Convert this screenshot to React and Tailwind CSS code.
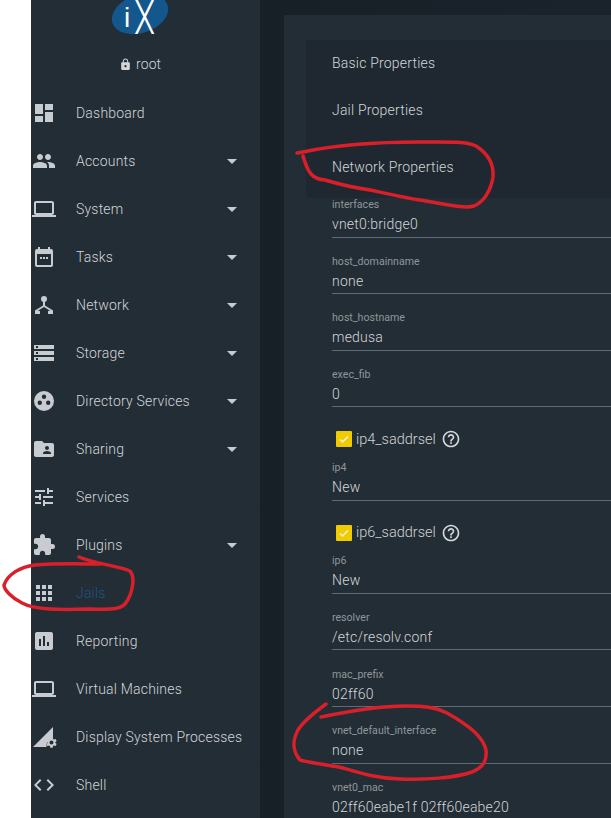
import React from "react";
import { MdDashboard, MdPeople, MdLaptop, MdStorage, MdFolderShared, MdTune, MdExtension, MdApps, MdAssessment, MdCode, MdLock, MdHelpOutline, MdSettings } from "react-icons/md";

const Tasks = (p) => (
  <svg viewBox="0 0 24 24" {...p} fill="currentColor"><path d="M19 4h-1V2h-2v2H8V2H6v2H5a2 2 0 0 0-2 2v14a2 2 0 0 0 2 2h14a2 2 0 0 0 2-2V6a2 2 0 0 0-2-2zm0 16H5V9h14v11zM8 12h2v2H8zm3 0h2v2h-2zm3 0h2v2h-2z" /></svg>
);
const Net = (p) => (
  <svg viewBox="0 0 24 24" {...p} fill="currentColor"><circle cx="12" cy="6" r="3" /><path d="M3 17.5 11 12.5V7h2v5.5l8 5v3.5h-5v-3l2.200-.3L12 14l-6.200 3.700L8 18v3H3z" /></svg>
);
const Dir = (p) => (
  <svg viewBox="0 0 24 24" {...p} fill="currentColor"><path fillRule="evenodd" d="M12 2a10 10 0 1 0 0 20 10 10 0 0 0 0-20zm0 3.500a2.200 2.200 0 1 1 0 4.400 2.200 2.200 0 0 1 0-4.400zM7.800 11.500a2.200 2.200 0 1 1 0 4.400 2.200 2.200 0 0 1 0-4.400zm8.400 0a2.200 2.200 0 1 1 0 4.400 2.200 2.200 0 0 1 0-4.400z" /></svg>
);
const Proc = (p) => (
  <span className="relative block h-6 w-6">
    <svg viewBox="0 0 24 24" {...p} fill="currentColor"><path d="M1 22 21 2v12a6.500 6.500 0 0 0-6.500 8z" /></svg>
    <MdSettings className="absolute right-[-2px] bottom-0 h-[13px] w-[13px]" />
  </span>
);

const items = [
  ["Dashboard", MdDashboard, false],
  ["Accounts", MdPeople, true],
  ["System", MdLaptop, true],
  ["Tasks", Tasks, true],
  ["Network", Net, true],
  ["Storage", MdStorage, true],
  ["Directory Services", Dir, true],
  ["Sharing", MdFolderShared, true],
  ["Services", MdTune, false],
  ["Plugins", MdExtension, true],
  ["Jails", MdApps, false, true],
  ["Reporting", MdAssessment, false],
  ["Virtual Machines", MdLaptop, false],
  ["Display System Processes", Proc, false],
  ["Shell", MdCode, false],
];

function Field({ label, value }) {
  return (
    <div className="h-[56.67px]">
      <div className="h-[13px] text-[10.6px] leading-[13px] text-[#8f969c]">{label}</div>
      <div className="mt-[3px] h-[23.500px] text-[14px] font-light leading-[20px] tracking-[0.22px] text-[#d3d6d9] border-b border-[#5f6a72]">{value}</div>
    </div>
  );
}

function Check({ label }) {
  return (
    <div className="flex h-[36.500px] items-center pl-1 pb-[7px]">
      <span className="flex h-4 w-4 items-center justify-center rounded-[1px] bg-[#f0cb00]">
        <svg viewBox="0 0 16 16" className="h-4 w-4" fill="none" stroke="#f6f1d0" strokeWidth="1.600"><path d="M4 8.500l2.600 2.300L12 5.500" /></svg>
      </span>
      <span className="ml-1 text-[14.500px] font-light text-[#d0d3d6]">{label}</span>
      <MdHelpOutline className="ml-[5px] h-[20px] w-[20px] text-[#d4d7d9]" />
    </div>
  );
}

function Ink({ d }) {
  return <path d={d} fill="none" stroke="#d9202a" strokeWidth="3.500" strokeLinecap="round" strokeLinejoin="round" />;
}

export default function App() {
  return (
    <div className="relative flex h-[818px] w-[611px] overflow-hidden bg-white font-['Roboto',sans-serif]">
      <div className="w-[31px] shrink-0 bg-white" />
      <aside className="w-[229px] shrink-0 bg-[#232d35] text-[#c8ccd0]">
        <div className="h-[89px]">
          <div className="relative ml-[80px] h-[35px] w-[60px] overflow-hidden">
            <svg viewBox="0 0 60 35" className="h-[35px] w-[60px]">
              <ellipse cx="29" cy="14" rx="29" ry="19" transform="rotate(-18 29 14)" fill="#14578c" />
              <text x="13" y="27" fontSize="28" fill="#ffffff" fontFamily="'Liberation Sans',sans-serif">i</text>
              <text transform="translate(23 34) scale(0.72 1)" fontSize="48" fontWeight="300" fill="#ffffff" fontFamily="'Roboto',sans-serif">X</text>
            </svg>
          </div>
          <div className="mt-[20px] flex items-center pl-[88px] text-[14px] font-light leading-[18px] tracking-[0.1px] text-[#d3d6d9]">
            <MdLock className="mr-[4px] h-[13px] w-[13px]" />
            root
          </div>
        </div>
        <nav>
          {items.map(([name, Icon, caret, active]) => (
            <div key={name} className="flex h-12 items-center pl-px">
              <span className="flex h-6 w-6 shrink-0 items-center justify-center">
                <Icon className="h-6 w-6 text-[#c8ccd0]" />
              </span>
              <span className={"ml-5 flex-1 text-[14px] font-light tracking-[0.2px] whitespace-nowrap " + (active ? "text-[#1f5584]" : "text-[#d3d6d9]")}>{name}</span>
              {caret && <span className="mr-[23px] h-0 w-0 border-x-[5px] border-t-[5px] border-x-transparent border-t-[#c8ccd0]" />}
            </div>
          ))}
        </nav>
      </aside>
      <main className="flex-1 bg-gradient-to-r from-[#171f27] to-[#1a232b] pl-6 pt-[15px]">
        <div className="h-full bg-[#232d35] pl-[22px] pt-[25px]">
          <div className="h-full">
            <div className="bg-[#1f2830] pl-[26px] text-[14px] font-light tracking-[0.2px] text-[#d3d6d9]">
              <div className="flex h-[46px] items-center">Basic Properties</div>
              <div className="flex h-12 items-center">Jail Properties</div>
              <div className="flex h-[64px] items-center pt-[2px]">Network Properties</div>
            </div>
            <div className="pl-[26px]">
              <Field label="interfaces" value="vnet0:bridge0" />
              <Field label="host_domainname" value="none" />
              <Field label="host_hostname" value="medusa" />
              <Field label="exec_fib" value="0" />
              <Check label="ip4_saddrsel" />
              <Field label="ip4" value="New" />
              <Check label="ip6_saddrsel" />
              <Field label="ip6" value="New" />
              <Field label="resolver" value="/etc/resolv.conf" />
              <Field label="mac_prefix" value="02ff60" />
              <Field label="vnet_default_interface" value="none" />
              <Field label="vnet0_mac" value="02ff60eabe1f 02ff60eabe20" />
            </div>
          </div>
        </div>
      </main>
      <svg className="pointer-events-none absolute left-0 top-0 h-[818px] w-[611px]" viewBox="0 0 611 818">
        <Ink d="M79 557C95 564 120 566 130 571C136 578 132 595 125 604C118 611 105 609 90 609C60 610 35 610 22 603C12 598 4 590 4 585C8 574 20 567 35 565C55 563 85 564 100 564" />
        <Ink d="M297 153L303 152C335 145 380 142 420 142C445 142 465 141 476 146C490 155 494 165 493 177C491 190 484 202 474 206C465 209 445 204 420 200C400 197 385 193 370 190C350 187 335 183 325 180C312 179 308 173 303 156" />
        <Ink d="M326 704C315 712 303 722 298 730C292 741 293 752 300 760C315 764 330 765 343 768C360 773 375 778 400 779C425 780 455 778 472 772C484 767 487 760 486 750C483 737 470 726 447 713C435 707 425 706 405 706C375 706 345 712 321 717" />
      </svg>
    </div>
  );
}
